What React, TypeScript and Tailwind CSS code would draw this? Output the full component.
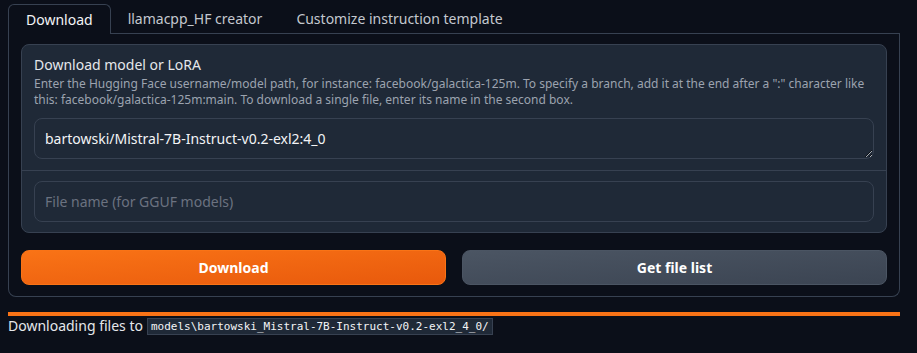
import React from "react";

const tabs = ["Download", "llamacpp_HF creator", "Customize instruction template"];

export default function App() {
  return (
    <div className="w-[917px] h-[353px] bg-[#0b0f19] font-['Noto_Sans',sans-serif] overflow-hidden">
      <div className="pl-2 pt-1 w-[900px]">
        {/* Tab strip */}
        <div className="flex h-[30px]">
          {tabs.map((t, i) =>
            i === 0 ? (
              <div
                key={t}
                className="px-[17px] border border-b-0 border-[#374151] rounded-t-md text-[14px] leading-[30px] text-[#f3f4f6]"
              >
                {t}
              </div>
            ) : (
              <div
                key={t}
                className="px-[17px] border-b border-[#374151] text-[14px] leading-[30px] text-[#c4c8cf]"
              >
                {t}
              </div>
            )
          )}
          <div className="flex-1 border-b border-[#374151]" />
        </div>

        {/* Tab panel */}
        <div className="border border-t-0 border-[#374151] rounded-b-lg px-3 pt-[10px] pb-[11px]">
          <div className="border border-[#374151] rounded-lg bg-[#1f2937]">
            <div className="px-3 pt-[10px] pb-[11px] border-b border-[#374151]">
              <div className="text-[14px] leading-[20px] text-[#e5e7eb]">Download model or LoRA</div>
              <div className="text-[12px] leading-[16px] text-[#9ca3af] mt-px">
                Enter the Hugging Face username/model path, for instance: facebook/galactica-125m. To specify a branch, add it at the end after a ":" character like this: facebook/galactica-125m:main. To download a single file, enter its name in the second box.
              </div>
              <textarea
                defaultValue="bartowski/Mistral-7B-Instruct-v0.2-exl2:4_0"
                rows={1}
                className="mt-[10px] block w-full h-[41px] resize-y [color-scheme:dark] bg-[#1f2937] border border-[#374151] rounded-lg px-[10px] py-[10px] text-[14px] leading-[19px] text-[#f3f4f6] outline-none font-['Noto_Sans',sans-serif]"
              />
            </div>
            <div className="px-3 pt-[10px] pb-[10px]">
              <input
                placeholder="File name (for GGUF models)"
                className="block w-full h-[41px] bg-[#1f2937] border border-[#374151] rounded-lg px-[10px] text-[14px] text-[#f3f4f6] placeholder:text-[#6b7280] outline-none font-['Noto_Sans',sans-serif]"
              />
            </div>
          </div>

          <div className="grid grid-cols-2 gap-4 mt-[17px]">
            <button className="h-[35px] rounded-lg border border-[#f97316] bg-gradient-to-br from-[#f97316] to-[#e8590c] text-white text-[14px] font-bold">
              Download
            </button>
            <button className="h-[35px] rounded-lg border border-[#4b5563] bg-gradient-to-br from-[#4b5563] to-[#3b4452] text-white text-[14px] font-bold">
              Get file list
            </button>
          </div>
        </div>

        {/* Status */}
        <div className="mt-[15px] h-[4px] bg-[#f97316]" />
        <div className="flex items-center h-[18px] mt-px">
          <span className="text-[14px] leading-[18px] text-[#e5e7eb]">Downloading files to</span>
          <code className="ml-[4px] bg-[#1f2937] border border-[#374151] px-[3px] text-[11px] leading-[15px] text-[#f3f4f6] font-['DejaVu_Sans_Mono',monospace]">
            models\bartowski_Mistral-7B-Instruct-v0.2-exl2_4_0/
          </code>
        </div>
      </div>
    </div>
  );
}
